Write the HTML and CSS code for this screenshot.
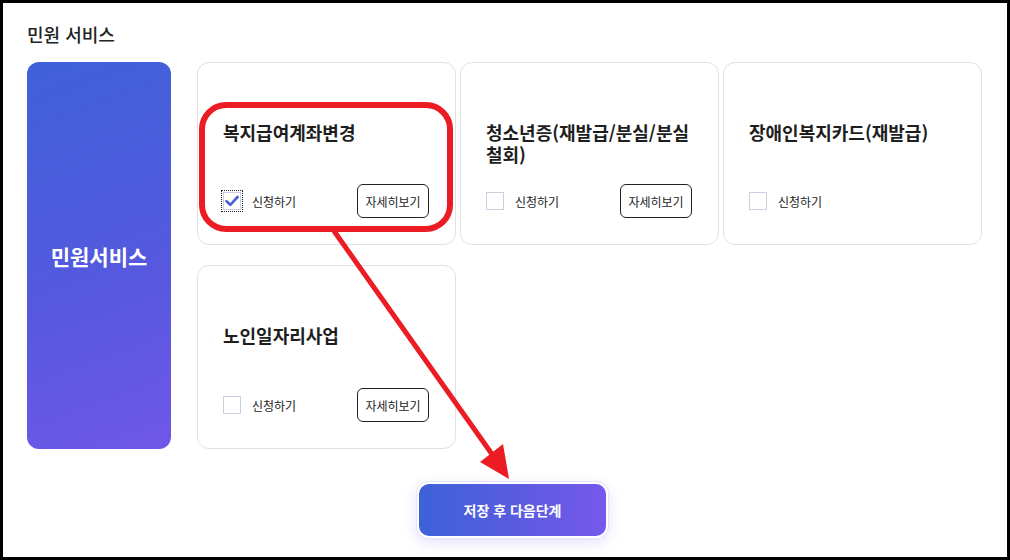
FILE: index.html
```html
<!DOCTYPE html>
<html lang="ko">
<head>
<meta charset="utf-8">
<title>민원 서비스</title>
<link rel="stylesheet" href="styles.css">
</head>
<body>
<div class="frame">
  <h2 class="section-title">민원 서비스</h2>
  <div class="layout">
    <div class="side-panel"><span>민원서비스</span></div>
    <div class="cards">
      <div class="card">
        <div class="card-title">복지급여계좌변경</div>
        <div class="card-row">
          <label class="check">
            <span class="box checked focus"><svg viewBox="0 0 18 18" width="18" height="18"><path d="M3.5 9.2 L7.3 12.8 L14.6 5" fill="none" stroke="#4c5fd8" stroke-width="2.6" stroke-linecap="round" stroke-linejoin="round"/></svg></span>
            <span class="check-label">신청하기</span>
          </label>
          <button class="detail-btn">자세히보기</button>
        </div>
      </div>
      <div class="card">
        <div class="card-title"><span class="line">청소년증(재발급/분실/분실</span><span class="line">철회)</span></div>
        <div class="card-row">
          <label class="check">
            <span class="box"></span>
            <span class="check-label">신청하기</span>
          </label>
          <button class="detail-btn">자세히보기</button>
        </div>
      </div>
      <div class="card">
        <div class="card-title">장애인복지카드(재발급)</div>
        <div class="card-row">
          <label class="check">
            <span class="box"></span>
            <span class="check-label">신청하기</span>
          </label>
        </div>
      </div>
      <div class="card">
        <div class="card-title">노인일자리사업</div>
        <div class="card-row">
          <label class="check">
            <span class="box"></span>
            <span class="check-label">신청하기</span>
          </label>
          <button class="detail-btn">자세히보기</button>
        </div>
      </div>
    </div>
  </div>
  <div class="actions">
    <button class="next-btn">저장 후 다음단계</button>
  </div>
  <svg class="annotation" width="1010" height="560" viewBox="0 0 1010 560">
    <rect x="202" y="105" width="248" height="124" rx="24" ry="24" fill="none" stroke="#ec1c24" stroke-width="6"/>
    <line x1="334" y1="231" x2="494" y2="457" stroke="#ec1c24" stroke-width="5"/>
    <polygon points="509,479 480,462 503,444" fill="#ec1c24"/>
  </svg>
</div>
</body>
</html>
```
FILE: styles.css
```css
* { box-sizing: border-box; }
html, body { margin: 0; padding: 0; background: #000; }
body {
  font-family: "Noto Sans CJK KR", "Noto Sans", sans-serif;
  color: #222;
}
.frame {
  position: relative;
  width: 1010px;
  height: 560px;
  border: 3px solid #000;
  background: #fff;
  padding: 19px 25px 0 24px;
  overflow: hidden;
}
.section-title {
  margin: 0;
  font-size: 18px;
  font-weight: 500;
  line-height: 24px;
  color: #222;
}
.layout {
  display: flex;
  gap: 26px;
  margin-top: 16px;
}
.side-panel {
  width: 144px;
  height: 387px;
  border-radius: 12px;
  background: linear-gradient(160deg, #3f61d9 0%, #5459de 55%, #7057e8 100%);
  display: flex;
  align-items: center;
  justify-content: center;
}
.side-panel span {
  color: #fff;
  font-size: 21px;
  font-weight: 700;
}
.cards {
  display: grid;
  grid-template-columns: repeat(3, 259px);
  grid-template-rows: 183px 184px;
  column-gap: 4px;
  row-gap: 20px;
}
.card {
  border: 1px solid #e1e1e4;
  border-radius: 12px;
  padding: 58px 20px 26px 25px;
  display: flex;
  flex-direction: column;
  justify-content: space-between;
}
.card-title {
  font-size: 18px;
  font-weight: 700;
  line-height: 22px;
  color: #1e1e1e;
}
.card-title .line { display: block; white-space: nowrap; }
.card-row {
  display: flex;
  align-items: center;
  justify-content: space-between;
  height: 34px;
  margin-right: 6px;
}
.check {
  display: flex;
  align-items: center;
  gap: 11px;
}
.box {
  width: 18px;
  height: 18px;
  border: 1px solid #c9d0e2;
  background: #fff;
  display: block;
  position: relative;
}
.box svg { display: block; position: absolute; left: -1px; top: -1px; }
.box.focus { outline: 1px dotted #222; outline-offset: 1px; }
.check-label {
  font-size: 12px;
  color: #222;
}
.detail-btn {
  width: 72px;
  height: 34px;
  border: 1px solid #222;
  border-radius: 6px;
  background: #fff;
  font-family: inherit;
  font-size: 12px;
  color: #222;
  padding: 0;
}
.actions {
  display: flex;
  padding-left: 390px;
  margin-top: 33px;
}
.next-btn {
  width: 191px;
  height: 56px;
  border: 2px solid #fff;
  border-radius: 12px;
  background: linear-gradient(90deg, #3d62d8 0%, #5c5be0 55%, #7659ec 100%);
  box-shadow: 0 0 0 1px #e6e4fa, 0 4px 14px rgba(100, 90, 230, 0.2);
  color: #fff;
  font-family: inherit;
  font-size: 14px;
  font-weight: 700;
  padding: 0;
}
.annotation {
  position: absolute;
  left: -3px;
  top: -3px;
  pointer-events: none;
}
```
